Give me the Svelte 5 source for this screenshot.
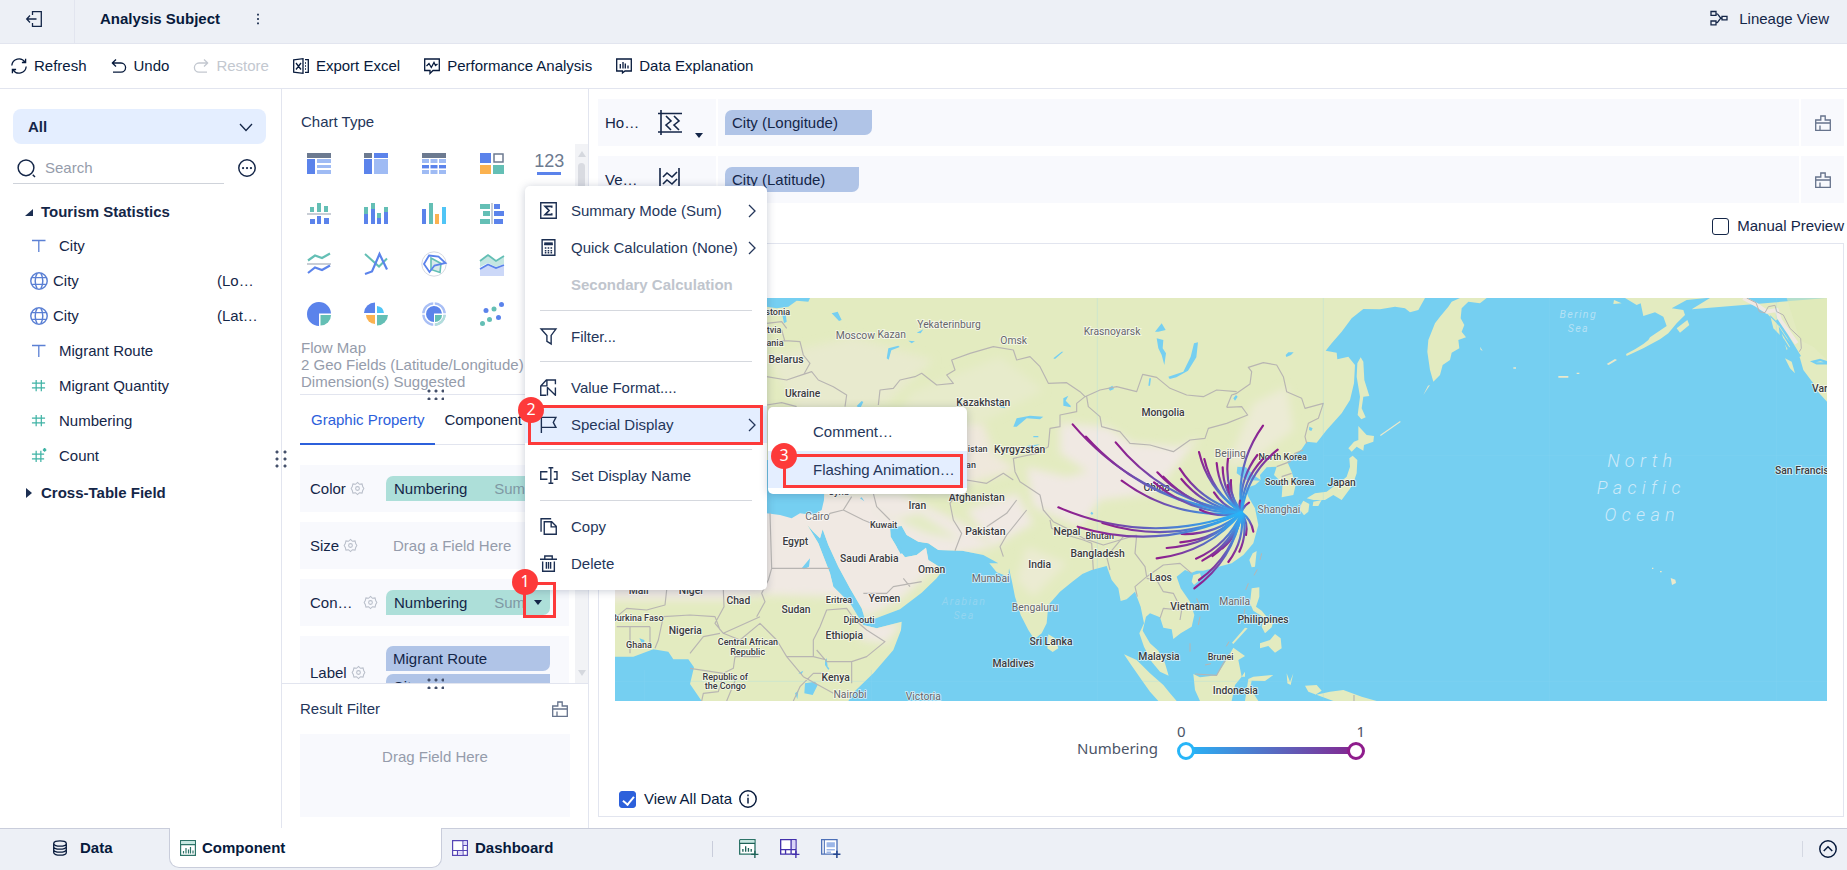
<script>
  const ink = '#1c2f52';
  const B = '#5b83eb', L = '#9fbbf4', S = '#6c7a90', G = '#64bfb5', O = '#fbb250', C = '#50c5f6', N = '#c9ced6';
  const r = (x, y, w, h, f) => `<rect x="${x}" y="${y}" width="${w}" height="${h}" fill="${f}"/>`;
  const line = (d, extra = '') => `<path d="${d}" fill="none" stroke="currentColor" stroke-width="1.3" ${extra}/>`;

  /* Chart type glyphs on a 24 by 24 grid */
  const charts = [
    [
      r(0, 1, 24, 5, S) + r(0, 7, 8, 15, B) + r(10, 7, 14, 4, L) + r(10, 13, 14, 3, L) + r(10, 18, 14, 4, L),
      r(0, 1, 8, 5, S) + r(10, 1, 14, 5, B) + r(0, 7, 8, 15, B) + r(10, 7, 14, 15, L),
      r(0, 1, 24, 5, S) + [0, 8.5, 17].map((x) => r(x, 7, 7, 4, L) + r(x, 13, 7, 3.4, B) + r(x, 18, 7, 4, L)).join(''),
      r(0, 1, 11, 10, B) + '<rect x="14" y="2" width="9" height="8" fill="none" stroke="#6c7a90" stroke-width="1.5"/>' + r(0, 13, 11, 9, O) + r(13, 13, 11, 9, G),
      'num'
    ],
    [
      r(3, 5, 4, 5, G) + r(10, 1, 4, 9, G) + r(17, 4, 4, 6, G) + r(0, 11, 24, 2, N) + r(3, 17, 5, 5, B) + r(10, 14, 4, 8, B) + r(17, 16, 5, 6, B),
      r(0, 5, 4, 7, G) + r(0, 12, 4, 10, B) + r(7, 1, 4, 6, G) + r(7, 7, 4, 15, B) + r(13, 11, 4, 5, G) + r(13, 16, 4, 6, B) + r(20, 5, 4, 5, G) + r(20, 10, 4, 12, B),
      r(0, 7, 4, 15, B) + r(7, 1, 4, 21, G) + r(13, 12, 4, 10, O) + r(20, 5, 4, 17, C),
      r(0, 2, 10, 5, G) + r(3, 9, 7, 5, G) + r(0, 17, 10, 5, G) + r(11, 1, 2, 21, N) + r(14, 2, 6, 5, B) + r(14, 9, 10, 5, B) + r(14, 17, 9, 5, B)
    ],
    [
      `<path d="M1 8.500l7-5 7 2.500 8-4.500" fill="none" stroke="${G}" stroke-width="2.200"/>` + r(0, 11, 24, 2, N) + `<path d="M1 21l7-5.500 7 2.500 8-4.500" fill="none" stroke="${B}" stroke-width="2.200"/>`,
      `<path d="M1 2l14 12.500 8-8" fill="none" stroke="${G}" stroke-width="2"/><path d="M1 22l7-2.500 7.500-17.500 7.500 15.500" fill="none" stroke="${B}" stroke-width="2.200"/>`,
      `<circle cx="12" cy="12" r="12.200" fill="none" stroke="#d5d9e2"/><path d="M9 6l10 5.500-1 9-9-3z" fill="#d9e9ea" stroke="${G}" stroke-width="1.600"/><path d="M7 3.500l9.500 1 7 6.500-11 2.500-5 6.500-5.500-8z" fill="none" stroke="${B}" stroke-width="1.800"/>`,
      `<path d="M0 9l8-6 8 6 8-5v8l-8 3-8-4-8 4z" fill="#c5e6e2"/><path d="M0 17l8-4 8 3 8-3v11H0z" fill="#ccd8f8"/><path d="M0 9l8-6 8 6 8-5" fill="none" stroke="${G}" stroke-width="1.800"/><path d="M0 17l8-4.500 8 3.500 8-3" fill="none" stroke="${B}" stroke-width="1.800"/>`
    ],
    [
      `<path d="M12 12V24A12 12 0 1 1 24 11.500H12z" fill="${B}"/><path d="M13.500 13H24a10.500 10.500 0 0 1-10.500 10.500z" fill="${G}"/>`,
      `<path d="M11 11H0A11 11 0 0 1 11 .5z" fill="${B}"/><path d="M13 11V4a8 8 0 0 1 7 7z" fill="${C}"/><path d="M11 13v9a9 9 0 0 1-9-9z" fill="${O}"/><path d="M13 13h11a11 11 0 0 1-11 10.500z" fill="${G}"/>`,
      `<circle cx="12" cy="12" r="10.700" fill="none" stroke="#a9bff5" stroke-width="2.300"/><path d="M13 22.700A10.700 10.700 0 0 0 22.700 13" fill="none" stroke="#b3dfda" stroke-width="2.300"/><path d="M12 0v3M12 21v3M0 12h3M21 12h3" stroke="#fff" stroke-width="1.500"/><path d="M12 12v8a8 8 0 1 1 8-8.500h-8z" fill="${B}"/><path d="M13 13h7a7 7 0 0 1-7 7z" fill="${G}"/>`,
      [[2.5, 21.500, G], [9.500, 17.500, G], [18.500, 15.500, B], [6, 8.500, B], [14, 7, G], [21.500, 2.500, B]].map(([x, y, c]) => `<circle cx="${x}" cy="${y}" r="2.500" fill="${c}"/>`).join('')
    ]
  ];

  /* Interface glyphs on a 16 by 16 grid */
  const icons = {
    exit: line('M6.500 4V.7h8.800v14.600H6.500V12M10.500 8H.8M4 4.500L.7 8 4 11.500'),
    more: '<g fill="currentColor"><rect x="7" y="2" width="2" height="2"/><rect x="7" y="7" width="2" height="2"/><rect x="7" y="12" width="2" height="2"/></g>',
    lineage: line('M1 1.500h5v3.800H1zM1 11h5v3.800H1zM12 6.300h5v3.600h-5zM6 3.400c3 0 3 4.700 5.500 4.700M6 13c3 0 3-4.900 5.500-4.900'),
    refresh: line('M.8 7.500A7.200 7.200 0 0 1 14 4.200M15.200 8.500A7.200 7.200 0 0 1 2 11.800M14.600.8v3.700h-3.700M1.400 15.200v-3.700h3.700'),
    undo: line('M5 1.500L1.300 5 5 8.500M1.300 5H10a4.600 4.600 0 0 1 0 9.200H2', 'stroke-linejoin="round"'),
    restore: line('M11 1.500L14.700 5 11 8.500M14.700 5H6a4.600 4.600 0 0 0 0 9.200h8', 'stroke-linejoin="round"'),
    excel: line('M.7 1.800L10 .7v14.600L.7 14.200zM12 1.700h3.300v12.600H12M3 5l5 6.500M8 5l-5 6.500M12 5h1M12 8h1M12 11h1'),
    perf: line('M.7 1h14.600v11.500H9l-3 3v-3H.7zM2.500 8L5 5.500l2.300 4L10 4.500 11.500 7.500 13.500 6'),
    explain: line('M.7 1h14.600v12H9L6.500 15v-2H.7zM4.300 6v4.500M7 4v6.500M9.300 5.500v5M12 7.500v3'),
    search: line('M14 14l2 2M15 7.800A7 7 0 1 1 1 7.800a7 7 0 0 1 14 0'),
    dots: line('M15.300 8A7.300 7.300 0 1 1 .7 8a7.300 7.300 0 0 1 14.600 0') + '<g fill="currentColor"><circle cx="4.500" cy="8" r="1"/><circle cx="8" cy="8" r="1"/><circle cx="11.500" cy="8" r="1"/></g>',
    down: line('M2 5l6 6.500L14 5'),
    right: line('M5 2l6 6-6 6'),
    text: line('M1 2.500h13.500M7.800 2.500V14'),
    globe: line('M15.300 8A7.300 7.300 0 1 1 .7 8a7.300 7.300 0 0 1 14.600 0M1.500 5h13M1.500 11h13M6.500.8C4 5 4 11 6.500 15.200M9.500.8c2.500 4.200 2.500 10.200 0 14.400'),
    hash: line('M5.500 2v12M11 2v12M1 5.500h14M1 10.500h14'),
    hashstar: line('M5.500 3v12M10.500 3v12M1 6.500h13M1 11.500h13M14.500 0v4M12.800 1l3.400 2M16.200 1l-3.400 2'),
    gear: line('M8 .5l2.400 2.300 3.200-.5.8 3.200L15.800 8l-1.400 2.500-.8 3.200-3.200-.5L8 15.500l-2.400-2.300-3.200.5-.8-3.200L.2 8l1.400-2.500.8-3.200 3.200.5zM10.300 8a2.300 2.300 0 1 1-4.600 0 2.300 2.300 0 0 1 4.600 0'),
    brush: line('M5.800 5V1h4.400v4h5.100v10.300H.7V5zM.7 8h14.600M5 10.500v5'),
    axisx: '<path d="M1 3.500h24M1 22h24M4 0v25M9 6l5 5-5 4 5 5M17 6l5 5-5 4 5 5" fill="none" stroke="currentColor" stroke-width="1.600"/>',
    axisy: '<path d="M3 1v23M22 1v23M6 10l4-4 5 4 5-5M6 17l4-4 5 4 5-5" fill="none" stroke="currentColor" stroke-width="1.600"/>',
    sigma: line('M.7.700h14.600v14.600H.7z') + '<path d="M11 5.500V4.200H4.800L8.500 8l-3.700 3.800H11v-1.300" fill="none" stroke="currentColor" stroke-width="1.600"/>',
    calc: line('M2 .7h12v14.600H2zM4 5.200h8') + '<path d="M4 4.400h8" stroke="currentColor" stroke-width="2.500"/><path d="M4.500 8.500h7M4.500 11h7M4.500 13h7" stroke="currentColor" stroke-width="1.500" stroke-dasharray="1.500 1.200"/>',
    filter: line('M1 1h14l-4.500 6v8l-4-2.500V7z'),
    format: line('M6 15.300H.7V6.500L6 1h8.500v4M6.500 1v5.500H1') + line('M7 15.500V8l7.500 7.300V8', 'stroke-linejoin="round"'),
    flag: line('M1.300 16V1.300h13.700L12.500 6l2.500 4.700H1.300'),
    rename: line('M7 4.500H.7v7H7M13 4.500h3v7h-3M8 .7h4.500M8 15.300h4.500M10.200.7v14.600'),
    copy: line('M1 13V.7h9.500M4 3.500h7l4.300 4.300v7.500H4zM10.500 3.500v4.800h4.800'),
    trash: line('M0 4h16M4.500 4V1h7v3M2.500 6v9.300h11V6M6 6.500V13M8 6.500V13M10 6.500V13'),
    db: line('M14.300 3.500c0 3.600-12.600 3.600-12.600 0s12.600-3.600 12.600 0v9c0 3.600-12.600 3.600-12.600 0v-9M1.700 6.500c0 3.600 12.600 3.600 12.600 0M1.700 9.500c0 3.600 12.600 3.600 12.600 0'),
    info: line('M15.300 8A7.300 7.300 0 1 1 .7 8a7.300 7.300 0 0 1 14.600 0M8 6.800V12M8 4v1.500'),
    up: line('M15.300 8A7.300 7.300 0 1 1 .7 8a7.300 7.300 0 0 1 14.600 0M4.200 9.800L8 6l3.800 3.800'),
    component: '<path d="M.6.600h14.800v14.800H.6z" fill="#fff" stroke="#2d7468" stroke-width="1.200"/><path d="M1.200 1.200h13.600v3H1.200z" fill="#c6e8e1"/><path d="M.6 4.600h14.800M3.500 13.500V11M6 13.500V8M8.500 13.500V9.500M10.500 13.500V7M13 13.500v-3" stroke="#2d7468" stroke-width="1.200"/>',
    dashboard: '<path d="M.6.600h14.800v14.800H.6z" fill="#fff" stroke="#5645b5" stroke-width="1.200"/><path d="M11 1v14M1 10.500h14M5.500 10.500V15M11 5.500h4" stroke="#5645b5" stroke-width="1.200"/><path d="M11.600 1.200h3.200v3.700h-3.200zM6 11.200h4.400v3.700H6z" fill="#ddd8fa"/>',
    plusA: '<path d="M.6.600h13.800v9M14.400.6v13H.6V.6" fill="#fff" stroke="#2d7468" stroke-width="1.200"/><path d="M1.200 1.200h12.600v2.300H1.200z" fill="#c6e8e1"/><path d="M.6 4h13.800M3.500 11.500V9M6 11.500V6.500M8.500 11.500V8M11 11.500V9M11 13.800h6.500M14.300 10.500V17" stroke="#1d6257" stroke-width="1.200"/>',
    plusB: '<path d="M.6.600h13.800v13H.6z" fill="#fff" stroke="#4330ac" stroke-width="1.200"/><path d="M10.600 1.200h3.200v7.500h-3.200z" fill="#d9d3f8"/><path d="M10 .6v13M.6 9.500h13.800M5 9.500v4M11 13.800h6.500M14.300 10.500V17" stroke="#4330ac" stroke-width="1.200"/>',
    plusC: '<path d="M.6.600h13.800v13H.6z" fill="#fff" stroke="#4d71b8" stroke-width="1.200"/><path d="M3 .6v13" stroke="#4d71b8"/><path d="M5 3h7.500v4.500H5zM5 9h7.500v1.300H5zM5 11.300h4v1.300H5z" fill="#9bb6e8"/><path d="M11 13.800h6.500M14.300 10.500V17" stroke="#26478f" stroke-width="1.400"/>'
  };

  const tools = [
    ['refresh', 'Refresh'], ['undo', 'Undo'], ['restore', 'Restore'], ['excel', 'Export Excel'],
    ['perf', 'Performance Analysis'], ['explain', 'Data Explanation']
  ];
  const fields = [
    ['text', 'City'], ['globe', 'City', '(Lo…'], ['globe', 'City', '(Lat…'], ['text', 'Migrant Route'],
    ['hash', 'Migrant Quantity'], ['hash', 'Numbering'], ['hashstar', 'Count']
  ];
  const menu = [
    { icon: 'sigma', label: 'Summary Mode (Sum)', sub: true },
    { icon: 'calc', label: 'Quick Calculation (None)', sub: true },
    { label: 'Secondary Calculation', off: true },
    null,
    { icon: 'filter', label: 'Filter...' },
    null,
    { icon: 'format', label: 'Value Format....' },
    { icon: 'flag', label: 'Special Display', sub: true, on: true },
    null,
    { icon: 'rename', label: 'Set Display Name' },
    null,
    { icon: 'copy', label: 'Copy' },
    { icon: 'trash', label: 'Delete' }
  ];

  /* Map drawing units: three per pixel */
  const hub = [1925, 697];
  const flows = [
    [218, 433], [258, 470], [347, 487], [365, 602], [472, 577], [490, 590], [462, 607], [539, 565], [544, 597], [597, 516],
    [613, 537], [650, 549], [668, 562], [684, 536], [693, 600], [683, 615], [642, 637], [600, 689], [789, 437], [772, 525],
    [788, 538], [833, 509], [747, 668], [720, 662], [760, 755], [738, 765], [718, 815], [685, 846], [667, 805], [637, 828],
    [607, 842], [588, 836], [583, 925], [597, 900], [545, 762], [541, 787], [500, 804], [470, 835], [307, 729], [233, 740], [175, 682]
  ].map(([sx, y]) => {
    const x = sx + 1200;
    const cx = (x + hub[0]) / 2 + (y - hub[1]) * 0.2;
    const cy = (y + hub[1]) / 2 + (hub[0] - x) * 0.2;
    return { x, y, d: `M${x} ${y}Q${cx} ${cy} ${hub[0]} ${hub[1]}` };
  });

  const countries = [
    ['Belarus', 558, 248], ['Ukraine', 608, 350], ['Kazakhstan', 1150, 377], ['Kyrgyzstan', 1259, 520], ['Afghanistan', 1130, 664],
    ['Iran', 952, 688], ['Pakistan', 1156, 764], ['Egypt', 586, 794], ['Saudi Arabia', 808, 845], ['Oman', 995, 878],
    ['Yemen', 853, 965], ['Chad', 415, 973], ['Sudan', 588, 998], ['Nigeria', 256, 1063], ['Ethiopia', 733, 1078], ['Kenya', 707, 1202],
    ['India', 1319, 865], ['Nepal', 1401, 764], ['Bangladesh', 1493, 830], ['Laos', 1682, 902], ['Vietnam', 1769, 991],
    ['Sri Lanka', 1353, 1094], ['Maldives', 1240, 1161], ['Malaysia', 1677, 1141], ['Philippines', 1989, 1030],
    ['Indonesia', 1906, 1242], ['Mongolia', 1689, 407], ['Japan', 2225, 618], ['China', 1670, 634], ['Mali', 116, 942], ['Niger', 274, 942]
  ];
  const small = [
    ['stonia', 533, 106], ['tvia', 522, 158], ['ania', 525, 198], ['istan', 1133, 515], ['an', 1113, 565], ['Syria', 716, 645],
    ['Kuwait', 851, 745], ['Eritrea', 717, 969], ['Djibouti', 777, 1030], ['Central African', 444, 1095], ['Republic', 443, 1124],
    ['Republic of', 376, 1199], ['the Congo', 376, 1227], ['Burkina Faso', 112, 1022], ['Ghana', 117, 1105], ['Bhutan', 1499, 778],
    ['North Korea', 2048, 541], ['South Korea', 2069, 615], ['Brunei', 1862, 1140]
  ];
  const cities = [
    ['Moscow', 766, 178], ['Kazan', 875, 173], ['Yekaterinburg', 1047, 144], ['Omsk', 1241, 193], ['Krasnoyarsk', 1536, 166],
    ['Cairo', 652, 719], ['Mumbai', 1172, 905], ['Bengaluru', 1305, 994], ['Nairobi', 750, 1255], ['Victoria', 970, 1259],
    ['Beijing', 1891, 532], ['Shanghai', 2037, 700], ['Manila', 1904, 974]
  ];
</script>

{#snippet ico(name, size = 16)}
  <svg class="ico" width={size} height={size} viewBox="0 0 {name.startsWith('axis') ? '26 26' : name.startsWith('plus') || name === 'lineage' ? '18 18' : '16 16'}" aria-hidden="true">{@html icons[name]}</svg>
{/snippet}

<div class="app">
  <header>
    <button class="exit" aria-label="Exit">{@render ico('exit')}</button>
    <h1>Analysis Subject</h1>
    <button aria-label="More">{@render ico('more', 14)}</button>
    <button class="lineage">{@render ico('lineage', 18)}Lineage View</button>
  </header>

  <nav class="toolbar">
    {#each tools as [icon, label]}
      <button disabled={icon === 'restore'}>{@render ico(icon)}{label}</button>
    {/each}
  </nav>

  <main>
    <aside class="fields">
      <div class="picker">
        <select aria-label="Table"><option>All</option></select>
        {@render ico('down')}
      </div>
      <div class="find">
        <label>{@render ico('search', 18)}<input placeholder="Search" aria-label="Search" /></label>
        <button aria-label="Options">{@render ico('dots', 18)}</button>
      </div>
      <div class="group first"><svg width="9" height="9" viewBox="0 0 9 9"><path d="M8 1v7H0z" fill={ink} /></svg>Tourism Statistics</div>
      <ul>
        {#each fields as [icon, name, tail]}
          <li class={icon}>{@render ico(icon, icon === 'globe' ? 18 : 16)}<span>{name}</span>{#if tail}<em>{tail}</em>{/if}</li>
        {/each}
      </ul>
      <div class="group"><svg width="8" height="10" viewBox="0 0 8 10"><path d="M1 0l6 5-6 5z" fill={ink} /></svg>Cross-Table Field</div>
      <div class="grip side"></div>
    </aside>

    <section class="design">
      <div class="types">
        <div class="typebody">
          <h2>Chart Type</h2>
          {#each charts as row}
            <div class="typerow">
              {#each row as glyph}
                <button aria-label="Chart">
                  {#if glyph === 'num'}
                    <span class="num">123</span>
                  {:else}
                    <svg width="24" height="24" viewBox="0 0 24 24" overflow="visible">{@html glyph}</svg>
                  {/if}
                </button>
              {/each}
            </div>
          {/each}
          <p>Flow Map<br />2 Geo Fields (Latitude/Longitude)<br />Dimension(s) Suggested</p>
        </div>
        <div class="track top"><svg width="8" height="6" viewBox="0 0 8 6"><path d="M4 0l4 6H0z" fill="#d5d8de" /></svg><i></i></div>
        <div class="grip"></div>
      </div>

      <div class="tabs">
        <button class="active">Graphic Property</button>
        <button>Component</button>
      </div>

      <div class="props">
        <div class="proplist">
          <div class="prop"><span class="name">Color{@render ico('gear', 13)}</span><div class="pill green">Numbering<small>Sum</small></div></div>
          <div class="prop"><span class="name">Size{@render ico('gear', 13)}</span><span class="hint">Drag a Field Here</span></div>
          <div class="prop"><span class="name wide">Con…{@render ico('gear', 13)}</span><div class="pill green">Numbering<small>Sum</small><button class="caret" aria-label="Open menu"></button></div></div>
          <div class="prop tall"><span class="name">Label{@render ico('gear', 13)}</span><div class="stack"><div class="pill">Migrant Route</div><div class="pill">City</div></div></div>
        </div>
        <div class="track"><svg width="8" height="6" viewBox="0 0 8 6"><path d="M4 6l4-6H0z" fill="#d5d8de" /></svg></div>
      </div>

      <div class="filter">
        <div class="grip"></div>
        <div class="filterhead"><h2>Result Filter</h2><button aria-label="Clear">{@render ico('brush')}</button></div>
        <div class="drop">Drag Field Here</div>
      </div>
    </section>

    <section class="canvas">
      <div class="axis">
        <div class="axisname">Ho…{@render ico('axisx', 26)}<button class="caret" aria-label="Axis options"></button></div>
        <div class="axisbody"><div class="pill">City (Longitude)</div></div>
        <button class="clear" aria-label="Clear">{@render ico('brush')}</button>
      </div>
      <div class="axis">
        <div class="axisname">Ve…{@render ico('axisy', 26)}</div>
        <div class="axisbody"><div class="pill">City (Latitude)</div></div>
        <button class="clear" aria-label="Clear">{@render ico('brush')}</button>
      </div>
      <label class="manual"><input type="checkbox" />Manual Preview</label>

      <div class="panel">
        <svg class="map" viewBox="45 54 3636 1209" role="img" aria-label="Flow map">
          <defs>
            {#each flows as f, i}
              <linearGradient id="flow{i}" gradientUnits="userSpaceOnUse" x1={f.x} y1={f.y} x2={hub[0]} y2={hub[1]}>
                <stop offset="0" stop-color="#8f1c8c" /><stop offset=".2" stop-color="#85309a" /><stop offset=".75" stop-color="#3f93e0" /><stop offset="1" stop-color="#27b5f8" />
              </linearGradient>
            {/each}
            <filter id="soft" x="-20%" y="-20%" width="140%" height="140%"><feGaussianBlur stdDeviation="12" /></filter>
            <clipPath id="land"><path d="M45 54H2475L2455 90 2430 97 2415 85 2385 80 2340 88 2290 87 2255 115 2225 155 2195 190 2177 212 2210 218 2212 238 2245 230 2265 255 2262 310 2250 360 2225 400 2180 450 2150 488 2120 485 2105 508 2075 532 2062 545 2075 575 2087 615 2080 645 2045 652 2048 610 2022 585 2030 560 2000 562 1980 585 1982 600 1960 585 1938 562 1912 560 1910 580 1925 590 1940 600 1980 602 1965 615 1935 625 1945 650 1965 685 1975 735 1960 790 1930 825 1895 850 1850 862 1810 872 1790 872 1775 878 1755 870 1730 890 1742 925 1770 965 1783 1005 1775 1040 1742 1060 1720 1077 1715 1048 1690 1043 1680 1012 1650 1000 1638 1010 1628 1052 1650 1090 1675 1112 1695 1150 1706 1187 1680 1175 1655 1145 1632 1100 1618 1060 1632 1030 1622 980 1605 935 1580 958 1562 963 1555 925 1535 900 1520 858 1475 870 1447 882 1415 907 1380 935 1345 975 1340 1030 1325 1060 1303 1078 1285 1050 1262 1005 1245 950 1235 900 1227 865 1225 890 1190 877 1168 850 1195 850 1150 825 1087 812 1015 810 985 790 955 785 920 765 905 738 870 742 872 770 890 800 915 832 950 825 978 803 985 840 1030 868 1010 895 965 938 900 988 820 1018 797 1025 785 985 750 925 715 860 685 795 668 748 660 775 640 755 622 735 655 790 690 880 700 920 750 970 790 1035 830 1045 905 1025 903 1050 880 1110 820 1180 765 1233 745 1263H305L270 1212 282 1162 265 1138 220 1138 205 1115 160 1108 100 1130 45 1130Z" /></clipPath>
          </defs>
          <rect x="45" y="54" width="3636" height="1209" fill="#75cff1" />
          <g clip-path="url(#land)">
            <rect x="45" y="54" width="2500" height="1209" fill="#e3ebc0" />
            <g filter="url(#soft)">
              <path d="M0 640H720L900 640 1090 730 1180 800 1040 830 900 960 800 1010 710 950 500 945 380 960 0 960Z" fill="#f0e9e3" />
              <path d="M1280 560L1400 590 1520 560 1760 520 1660 640 1500 660 1440 740 1300 680Z" fill="#f0e9e3" />
              <path d="M1380 430L1520 440 1600 490 1740 500 1800 470 1700 590 1500 600 1380 520Z" fill="#f0e9e3" />
              <path d="M850 440L1150 430 1180 520 1250 570 1000 640 900 560Z" fill="#efe8dc" />
              <path d="M520 640H640L780 650 750 720 600 760Z" fill="#f0e9e3" />
              <path d="M1100 690L1250 640 1300 730 1180 800Z" fill="#f0e9e3" />
              <path d="M500 230L760 170 1000 240 860 370 600 400Z" fill="#e8eace" />
              <path d="M930 340L1200 230 1330 330 1160 420 900 420Z" fill="#e7ebcb" />
              <path d="M1960 370L2060 320 2080 450 1960 540 1880 560Z" fill="#ecebd5" />
              <path d="M1280 800L1400 850 1300 950 1250 900Z" fill="#ebebd2" />
              <path d="M780 1030L905 1030 860 1090 780 1080Z" fill="#f0e9e3" />
              <path d="M800 680L880 720 960 700 1080 780 980 760Z" fill="#e3ebc4" />
            </g>
          </g>
          <g fill="#e3ebc0">
            <path d="M2282 232L2290 245 2293 300 2308 348 2290 350 2285 385 2297 412 2284 418 2273 405 2280 350 2270 290 2272 250ZM2275 438L2300 465 2322 468 2320 485 2292 495 2290 512 2270 500 2255 515 2245 505 2262 485 2275 480ZM2258 527L2272 540 2270 580 2258 615 2240 640 2225 660 2200 645 2175 660 2140 660 2120 655 2145 640 2180 635 2200 620 2222 605 2240 590 2250 560 2248 535ZM2110 662L2128 672 2125 695 2112 706 2100 690 2104 672ZM2140 665L2165 660 2155 678 2138 678Z" />
            <path d="M2580 54L2555 65 2545 80 2520 110 2505 130 2485 180 2482 215 2490 270 2500 305 2520 285 2528 255 2550 240 2555 218 2578 205 2575 180 2598 172 2585 155 2593 135 2582 115 2585 85 2605 65 2640 70 2660 54ZM1970 813L1965 860 1955 862 1948 840 1958 820ZM1782 915L1805 895 1800 880 1780 885 1775 905Z" />
            <path d="M1955 925L1978 922 1978 950 1968 980 1985 992 2000 1010 1990 1012 1960 992 1950 970ZM1992 1015L2020 1025 2015 1042 1995 1060 1985 1040ZM1980 1090L2010 1080 2025 1062 2042 1075 2045 1105 2025 1118 2005 1098 1980 1105ZM1943 1045L1900 1092 1896 1088 1935 1043Z" />
            <path d="M1780 1182L1800 1192 1850 1186 1870 1155 1885 1130 1900 1103 1935 1128 1915 1140 1925 1190 1905 1215 1895 1263H1800L1785 1230ZM1945 1197L1960 1190 2020 1185 1995 1203 1955 1202 1950 1225 1975 1222 1960 1240 1975 1263H1935ZM1572 1123L1610 1140 1650 1180 1690 1215 1710 1240 1730 1263H1675L1650 1235 1625 1200 1590 1150ZM2115 1217L2150 1215 2165 1232 2145 1245 2190 1235 2230 1230 2285 1250 2330 1263H2200L2125 1235ZM2060 1180L2070 1205 2080 1180 2072 1215 2062 1210Z" />
            <path d="M1345 1063L1365 1075 1375 1105 1358 1116 1342 1105ZM1935 1175L1925 1190H1935ZM625 640H650V646H625Z" />
            <path d="M3075 54L3110 75 3122 70 3130 108 3165 97 3190 110 3200 138 3170 158 3150 172 3145 180 3130 192 3105 208 3078 222 3080 228 3130 205 3180 178 3205 160 3230 130 3255 105 3250 90 3215 85 3260 60 3320 54ZM3230 145L3262 120 3268 135 3240 158ZM3042 60L3065 70 3040 72Z" />
            <path d="M3275 88L3330 54H3430L3470 75 3500 100 3530 130 3560 175 3590 210 3600 235 3610 270 3640 310 3640 320 3681 365V54ZM3555 235L3575 245 3585 280 3570 265ZM3510 105L3535 130 3540 170 3520 145ZM3545 160L3570 200 3560 210Z" />
          </g>
          <path d="M3560 54H3681V240L3640 200 3600 180Z" fill="#dde9b6" opacity=".6" />
          <path d="M3430 54L3470 75 3500 95 3530 90 3540 120 3590 190" fill="none" stroke="#f0e9e3" stroke-width="12" />
          <path d="M3212 894l14 5 2 10-12 6zM3180 873h5v4h-5zM3156 863h4v4h-4zM2740 262h8v4h-8zM2875 288h30v5h-30zM2930 278h8v4h-8zM3020 252l25-15 6 3-25 15zM2640 200l8 12-6-2zM2470 345l20-30-6 2zM2340 465l60-42 2 3-60 42z" fill="#ebe9cb" />

          <g fill="#75cff1">
            <path d="M500 54H630L625 65 590 62 565 80 530 85 500 80ZM0 540H675L672 660 665 690 640 705 600 700 575 715 540 705 500 700H0Z" />
            <path d="M695 100l18-5 12 25-8 3zM770 378l15-15 5 3-10 20zM545 95l12 5 3 25-8 5zM860 235l5-30 30-8 4 4-25 10-8 28zM950 158l20-10-8 12zM925 182l20 2-10 6zM1240 440l10-25 40-8 40 3-10 8-40-3-30 25zM1300 468h15v4h-15zM1280 498l40-5-30 12zM1705 290l45-15 22-45 10-40 12-3-5 45-25 40-35 20-20 5zM1665 155l20-25 12 20-22 5zM1670 175l20 5-2 25 10 15-5 35-8-30-10-20zM1360 235l25-20 5 0-25 22zM1190 355l10 15 15 10 0 5-18-5zM1648 295l5 0-3 22-5 0zM1525 325l12-8 5 10-12 5zM1390 355l15-8-8 15 15 15 0 5-22-5zM1900 355l8-10 5 5-8 12zM2057 225l8-8 16 0-8 8-14 6zM2128 440l10 5-4 8-7-3zM1480 700l-5-5-4 5 5 5zM605 865l25-30-3 25-15 8zM780 655l5-3 8 12zM905 640l15 15zM675 1140l5-5 3 25 5 5-3 5-10-15zM615 1210l30-5 8 10-15 30-25-5zM595 1180l15-8-5 10zM585 1240l10-8-3 25zM118 1075l15 5 0 12-8-4zM890 800l10-3 10 20-8 5z" />
            <path d="M3520 150L3550 180 3575 220M3530 120L3560 165 3600 230M3640 245l20-5 20 6v4h-30z" fill="none" stroke="#75cff1" stroke-width="7" />
          </g>

          <g fill="none" stroke="#b8b5b2" stroke-width="3.500" stroke-linejoin="round">
            <path d="M500 190L555 182 600 185 610 225 630 250 612 282 560 300 500 290M560 300L635 275 655 300 700 320 740 345 735 380M500 375L545 368 590 380M545 150L555 185M500 130L545 125 560 145M835 375L840 330 880 325 900 300 945 290 965 280 1010 315 1060 310 1040 285 1065 270 1055 240 1110 220 1180 200 1240 210 1250 240 1290 230 1320 260 1345 310 1400 308 1440 335 1455 350" />
            <path d="M1455 350L1500 330 1550 320 1610 335 1628 283 1670 292 1710 325 1760 345 1810 350 1850 330 1910 335M1880 382L1895 345 1910 340 1950 312 1955 275 1945 262 1990 248 2030 255 2050 290 2060 335 2105 355 2115 385 2170 370 2155 415 2125 430 2115 470 2120 490M1880 382L1925 380 1943 405 1880 430 1825 445 1815 475 1770 480 1720 515 1650 495 1590 490 1560 455 1505 440 1500 410 1465 380 1460 350M1455 350L1430 370 1430 395 1380 405 1380 440 1350 445 1345 500 1310 520 1240 535 1245 575 1260 605 1320 645 1330 690 1360 725 1400 745 1450 775 1510 795 1560 780 1610 765" />
            <path d="M1280 690L1220 765 1200 800 1210 830M1350 720L1355 745 1400 765 1450 780 1475 790 1480 870M1530 870L1520 830 1545 800 1570 770M1610 765L1605 820 1635 860 1640 890 1605 920 1612 950M1640 890L1690 855 1740 850 1775 880M1640 895L1670 900 1690 935 1720 940 1745 990 1740 1020M1680 1015L1690 985 1740 990M2030 560L2070 545 2085 520 2110 510M2045 590L2075 580" />
            <path d="M1100 600L1070 640 1050 670 1060 720 1085 760 1065 812M1100 600L1160 610 1210 580 1240 600M1160 740L1220 700 1250 660M820 640L830 680 870 720M680 720L690 700 730 690 790 720 850 745M730 690L755 650M510 700L515 865H690M515 865L505 900 485 940 495 965 470 1010M370 930L372 980 345 1030 370 1060 480 1010M200 930L195 975 140 990 80 985 50 1010M370 1060L420 1080 480 1030 530 1080 560 1130 640 1130 680 1140M640 1130L640 1080 660 1040 680 990 740 985 765 1020 800 1050 855 1085 800 1130 755 1145 680 1145 650 1110M190 1010L270 1005 345 1010 360 1050M190 1010L175 1080 165 1105M270 1120L310 1070 360 1060M270 1165L370 1180 400 1165 405 1130 480 1130M755 1145V1210M700 1240L610 1190 560 1130M370 1180L355 1235 310 1240 305 1263M380 1263L410 1190M580 1263L600 1220 640 1180 670 1180M790 940L860 940 880 920 965 905M930 920L910 895M1785 1182L1850 1186 1870 1150 1890 1120M2262 1245V1263M150 1040V1100M90 1040V1120M50 1040H150" />
            <path d="M3440 54L3468 68 3478 95 3495 98 3505 80 3525 76 3530 95 3550 105 3570 145 3602 175 3604 205 3598 215M1985 820l-5 20M1972 868l-10 18M1945 910l-8 20M1935 985l-3 18M1887 1085l-8 14M1770 1090v25M1790 955l8 20M1800 1010l-5 25M1815 1155l18-4" stroke-width="3" />
          </g>
          <path d="M1492 54V1263M2170 54V1263M2848 54V1263M3529 54V1263M2170 526H3681M45 1204H3681M814 1170V1263M133 1170V1263" stroke="#8cd7f3" stroke-width="2" opacity=".35" />

          <g class="seas">
            <text x="3127" y="560" class="big">North</text><text x="3124" y="642" class="big">Pacific</text><text x="3127" y="723" class="big">Ocean</text>
            <text x="2935" y="115">Bering</text><text x="2935" y="156">Sea</text><text x="1092" y="974">Arabian</text><text x="1092" y="1016">Sea</text>
          </g>
          <g class="names">
            {#each cities as [t, x, y]}<text {x} {y} class="city">{t}</text>{/each}
            {#each small as [t, x, y]}<text {x} {y} class="minor">{t}</text>{/each}
            {#each countries as [t, x, y]}<text {x} {y}>{t}</text>{/each}
            <text x="3636" y="335" class="edge">Var</text><text x="3525" y="581" class="edge">San Francis</text>
          </g>

          <g fill="none" stroke-width="6.500" stroke-linecap="round">
            {#each flows as f, i}<path d={f.d} stroke="url(#flow{i})" />{/each}
          </g>
        </svg>

        <div class="legend">
          <span>Numbering</span>
          <div class="scale">
            <div class="ends"><b>0</b><b>1</b></div>
            <div class="bar"><i></i><i></i></div>
          </div>
        </div>

        <div class="viewall">
          <label><input type="checkbox" checked />View All Data</label>
          {@render ico('info', 18)}
        </div>
      </div>
    </section>
  </main>

  <footer>
    <button class="data">{@render ico('db')}Data</button>
    <button class="current">{@render ico('component')}Component</button>
    <button class="dash">{@render ico('dashboard')}Dashboard</button>
    <div class="adds">
      <button aria-label="Add component">{@render ico('plusA', 20)}</button>
      <button aria-label="Add dashboard">{@render ico('plusB', 20)}</button>
      <button aria-label="Add report">{@render ico('plusC', 20)}</button>
    </div>
    <button class="collapse" aria-label="Collapse">{@render ico('up', 18)}</button>
  </footer>

  <div class="menu" role="menu">
    {#each menu as m}
      {#if m}
        <button role="menuitem" class:on={m.on} class:off={m.off} disabled={m.off}>
          <span class="slot">{#if m.icon}{@render ico(m.icon, 17)}{/if}</span>{m.label}
          {#if m.sub}<span class="chev">{@render ico('right', 16)}</span>{/if}
        </button>
      {:else}
        <hr />
      {/if}
    {/each}
  </div>
  <div class="menu submenu" role="menu">
    <button role="menuitem">Comment…</button>
    <button role="menuitem" class="on">Flashing Animation…</button>
  </div>
  <div class="mark one"><span>1</span></div>
  <div class="mark two"><span>2</span></div>
  <div class="mark three"><span>3</span></div>
</div>

<style>
  :global(body) { margin: 0; background: #fff; }
  .app, .app * { box-sizing: border-box; }
  .app {
    position: relative; display: flex; flex-direction: column; height: 100vh; overflow: hidden;
    font: 15px/18px "Liberation Sans", Arial, sans-serif; color: #142648;
  }
  button { display: inline-flex; align-items: center; margin: 0; padding: 0; border: 0; background: none; color: inherit; font: inherit; white-space: nowrap; }
  h1, h2, p, ul { margin: 0; padding: 0; font: inherit; }
  .ico { flex: none; display: block; overflow: visible; }

  header { flex: none; display: flex; align-items: center; height: 44px; background: #edf0f6; border-bottom: 1px solid #e2e5ef; padding-bottom: 6px; }
  .exit { height: 44px; width: 75px; padding-left: 26px; margin-bottom: -6px; padding-bottom: 6px; border-right: 1px solid #e2e5ef; }
  h1 { font-weight: bold; margin: 0 31px 0 25px; color: #071a3c; }
  .lineage { margin-left: auto; gap: 11px; padding-right: 18px; }

  .toolbar { flex: none; display: flex; align-items: center; gap: 24px; height: 45px; padding-left: 11px; border-bottom: 1px solid #e2e5ef; color: #071a3c; }
  .toolbar button { gap: 7px; }
  .toolbar button:disabled { color: #c3c8d0; }

  main { flex: 1; min-height: 0; display: flex; }
  .fields { position: relative; flex: 0 0 282px; width: 282px; min-width: 0; border-right: 1px solid #e2e5ef; padding: 20px 15px 0 13px; }
  .picker { position: relative; display: flex; align-items: center; height: 35px; border-radius: 8px; background: #e4eeff; }
  .picker select { appearance: none; flex: 1; min-width: 0; height: 35px; border: 0; background: none; padding: 0 15px; font: inherit; font-weight: bold; color: inherit; }
  .picker .ico { position: absolute; right: 12px; pointer-events: none; }
  .find { display: flex; align-items: center; gap: 14px; height: 40px; margin-bottom: 12px; padding-top: 8px; }
  .find label { flex: 1; min-width: 0; display: flex; align-items: center; gap: 10px; height: 32px; padding-left: 4px; border-bottom: 1px solid #cfd3da; }
  .find input { flex: 1; min-width: 0; border: 0; outline: 0; padding: 0; background: none; font: inherit; }
  .find input::placeholder { color: #959cab; }
  .find button { margin-right: 10px; }
  .group { display: flex; align-items: center; gap: 8px; height: 37px; padding-left: 12px; font-weight: bold; }
  .group.first { height: 32px; gap: 7px; }
  ul { list-style: none; margin-bottom: 1px; }
  li { display: flex; align-items: center; gap: 13px; height: 35px; padding-left: 18px; }
  li .ico { color: #3fb3a5; }
  li.text .ico, li.globe .ico { color: #5b80d4; }
  li.text .ico { width: 16px; height: 16px; }
  li.text { gap: 12px; }
  li.hash .ico, li.hashstar .ico { width: 15px; height: 15px; }
  li.globe { gap: 5px; padding-left: 17px; }
  li em { margin-left: auto; width: 49px; font-style: normal; }

  .grip { position: absolute; z-index: 1; left: 50%; bottom: -5px; width: 17px; height: 11px; margin-left: -8px; background: radial-gradient(circle at 2px 2px, #44506b 1px, transparent 2px) 0 0 / 7px 8px; }
  .grip.side { left: auto; right: -6px; bottom: auto; top: 361px; width: 12px; height: 18px; background-size: 8px 7px; }

  .design { flex: 0 0 307px; width: 307px; min-width: 0; display: flex; flex-direction: column; min-height: 0; border-right: 1px solid #e2e5ef; }
  .types { position: relative; flex: none; display: flex; }
  .types::after { content: ""; position: absolute; left: 18px; right: 0; bottom: 0; border-bottom: 1px solid #e2e5ef; }
  .typebody { flex: 1; min-width: 0; padding: 24px 0 5px 8px; }
  h2 { color: #24365a; }
  .typebody h2 { margin: 0 0 8px 11px; }
  .typerow { display: grid; grid-template-columns: repeat(5, 1fr); margin-right: -3px; height: 50px; }
  .typerow button { justify-content: center; }
  .num { width: 24px; height: 22px; border-bottom: 3px solid #5b83eb; font: 18px/17px "Liberation Sans Narrow", "Liberation Sans", sans-serif; color: #6c7a90; text-align: center; display: flex; justify-content: center; }
  p { padding-left: 11px; line-height: 17px; color: #959cab; white-space: nowrap; }
  .track { flex: 0 0 13px; display: flex; flex-direction: column; justify-content: flex-end; align-items: center; padding: 7px 0; background: #f2f3f6; }
  .track.top { justify-content: flex-start; gap: 6px; margin-top: 55px; }
  .track i { width: 7px; height: 120px; border-radius: 4px; background: #d9dbe1; }
  .tabs { flex: none; display: flex; height: 50px; margin-left: 18px; border-bottom: 1px solid #e2e5ef; }
  .tabs button { height: 50px; padding: 0 11px; }
  .tabs button + button { padding: 0 9px; }
  .tabs .active { color: #2c60db; box-shadow: inset 0 -2px #2c60db; }
  .props { flex: 1; min-height: 0; display: flex; overflow: hidden; }
  .proplist { flex: 1; min-width: 0; display: flex; flex-direction: column; gap: 10px; padding: 20px 6px 0 18px; }
  .prop { flex: none; display: flex; align-items: center; min-height: 47px; padding-left: 10px; background: #f8f9fd; }
  .name { flex: 0 0 76px; display: flex; align-items: center; gap: 5px; white-space: nowrap; }
  .name .ico { color: #b9bfca; }
  .name.wide { gap: 11px; }
  .hint { padding-left: 7px; color: #959cab; white-space: nowrap; }
  .pill { position: relative; display: flex; align-items: center; height: 25px; padding: 0 20px 0 7px; border-radius: 7px 0 7px 0; background: #b0c4e7; white-space: nowrap; }
  .prop .pill { width: 164px; }
  .pill.green { background: #addfd9; padding-left: 8px; }
  .pill small { margin-left: auto; margin-right: 6px; font-size: 15px; color: #7f99a4; }
  .pill.green { padding-right: 19px; }
  .caret { width: 0; height: 0; border: 4px solid transparent; border-top: 5px solid #142648; border-bottom: 0; }
  .pill .caret { position: absolute; right: 8px; top: 10px; }
  .prop.tall { padding-top: 10px; padding-bottom: 10px; }
  .stack { display: grid; gap: 3px; }
  .filter { position: relative; flex: none; border-top: 1px solid #e2e5ef; padding: 16px 18px 11px; }
  .filter .grip { bottom: auto; top: -6px; }
  .filterhead { display: flex; justify-content: space-between; padding-right: 2px; margin-bottom: 16px; }
  .filterhead button, .clear { color: #66738c; }
  .drop { height: 83px; padding-top: 14px; background: #f8f9fd; text-align: center; color: #959cab; }

  .canvas { flex: 1; min-width: 0; display: flex; flex-direction: column; padding: 10px 3px 11px 9px; }
  .axis { flex: none; display: flex; gap: 2px; height: 47px; margin-bottom: 10px; }
  .axisname { flex: 0 0 118px; display: flex; align-items: center; padding-left: 7px; background: #f8f9fd; position: relative; }
  .axisname .ico { position: absolute; left: 59px; color: #142648; }
  .axisname .caret { position: absolute; left: 97px; top: 34px; }
  .axisbody { flex: 1; display: flex; align-items: center; padding-left: 7px; background: #f8f9fd; }
  .axisbody .pill { padding-right: 34px; }
  .clear { flex: 0 0 43px; justify-content: center; background: #f8f9fd; }
  .axis + .axis { margin-bottom: 0; }
  .manual { flex: none; display: flex; justify-content: flex-end; align-items: center; gap: 8px; height: 40px; padding-top: 6px; }
  input[type="checkbox"] { appearance: none; flex: none; width: 17px; height: 17px; margin: 0; border: 1px solid #142648; border-radius: 3px; background: #fff; }
  input[type="checkbox"]:checked { position: relative; border-color: #2c60db; background: #2c60db; }
  input[type="checkbox"]:checked::after { content: ""; position: absolute; left: 5px; top: 2px; width: 5px; height: 9px; border: solid #fff; border-width: 0 2px 2px 0; transform: rotate(40deg); }
  .panel { flex: 1; min-height: 0; display: flex; flex-direction: column; border: 1px solid #e2e5ef; padding: 54px 16px 8px; }
  .map { display: block; flex: none; width: 100%; height: auto; }
  .names text { font-family: Roboto, sans-serif; font-size: 31px; font-weight: 500; fill: #3b3b40; text-anchor: middle; paint-order: stroke; stroke: #ffffffb0; stroke-width: 5px; }
  .names .city { font-weight: 400; fill: #65656a; }
  .names .minor { font-size: 27px; font-weight: 500; }
  .names .edge { font-weight: 500; text-anchor: start; }
  .seas text { font-family: Roboto, sans-serif; font-size: 32px; font-style: italic; fill: #b4e1f5; text-anchor: middle; letter-spacing: 4px; }
  .seas .big { font-size: 54px; letter-spacing: 16px; font-weight: 300; fill: #cdeaf9; }
  .seas text:nth-child(n + 6) { fill: #93d5f0; }

  .legend { flex: none; display: flex; justify-content: center; align-items: flex-end; gap: 19px; margin-top: 20px; font-family: "Noto Sans", sans-serif; color: #4c5567; }
  .legend span { line-height: 23px; }
  .scale { width: 188px; }
  .ends { display: flex; justify-content: space-between; line-height: 20px; }
  .ends b { font-weight: 400; }
  .bar { display: flex; justify-content: space-between; align-items: center; height: 19px; background: linear-gradient(90deg, #27b5f8, #85258f) 9px 50% / 170px 7px no-repeat; }
  .bar i { width: 18px; height: 18px; border: 3px solid #27b5f8; border-radius: 50%; background: #fff; }
  .bar i + i { border-color: #8f1c8c; }
  .viewall { display: flex; align-items: center; gap: 7px; margin-top: auto; padding-left: 4px; color: #071a3c; }
  .viewall label { display: flex; align-items: center; gap: 8px; }

  footer { flex: none; display: flex; height: 42px; background: #edf0f6; font-weight: bold; color: #071a3c; box-shadow: inset 0 1px #c9cddb; }
  footer > button { height: 40px; }
  .data { width: 169px; padding-left: 52px; gap: 12px; }
  .current { width: 273px; height: 40px; padding-left: 10px; gap: 6px; background: #fff; border: 1px solid #c9cddb; border-top: 0; border-radius: 0 0 10px 10px; }
  .dash { padding-left: 10px; gap: 7px; }
  .adds { display: flex; align-items: center; align-self: center; gap: 21px; height: 16px; margin-left: 159px; padding-left: 26px; border-left: 1px solid #c9cddb; }
  .collapse { align-self: center; margin-left: auto; padding: 0 10px 0 16px; border-left: 1px solid #d4d8e2; }
  footer .collapse { height: 16px; }

  .menu { position: absolute; z-index: 5; left: 525px; top: 186px; width: 242px; padding: 6px 0 8px; border-radius: 5px; background: #fff; box-shadow: 0 1px 8px #26395a40; color: #24365a; }
  .menu button { position: relative; display: flex; width: 100%; height: 37px; padding-left: 15px; }
  .menu .slot { width: 31px; flex: none; color: #1c2f52; }
  .menu .chev { position: absolute; right: 7px; }
  .menu .on { background: #e4eeff; }
  .menu .off { height: 38px; font-weight: bold; color: #c0c5cd; }
  .menu hr { margin: 6px 15px 7px; border: 0; border-top: 1px solid #d5d8de; }
  .submenu { left: 768px; top: 407px; width: 199px; padding: 6px 0; }
  .submenu button { height: 38px; padding-left: 45px; }
  .submenu .on { height: 37px; }
  .mark { position: absolute; z-index: 6; border: 3px solid #fd3a3a; pointer-events: none; }
  .mark span { position: absolute; width: 26px; height: 26px; border-radius: 50%; background: #fd3a3a; color: #fff; text-align: center; font: 16px/24px "Noto Sans", sans-serif; }
  .one { left: 523px; top: 582px; width: 33px; height: 36px; }
  .one span { left: -14px; top: -16px; }
  .two { left: 528px; top: 405px; width: 235px; height: 40px; }
  .two span { left: -13px; top: -11px; }
  .three { left: 783px; top: 454px; width: 180px; height: 34px; }
  .three span { left: -15px; top: -14px; }
</style>
